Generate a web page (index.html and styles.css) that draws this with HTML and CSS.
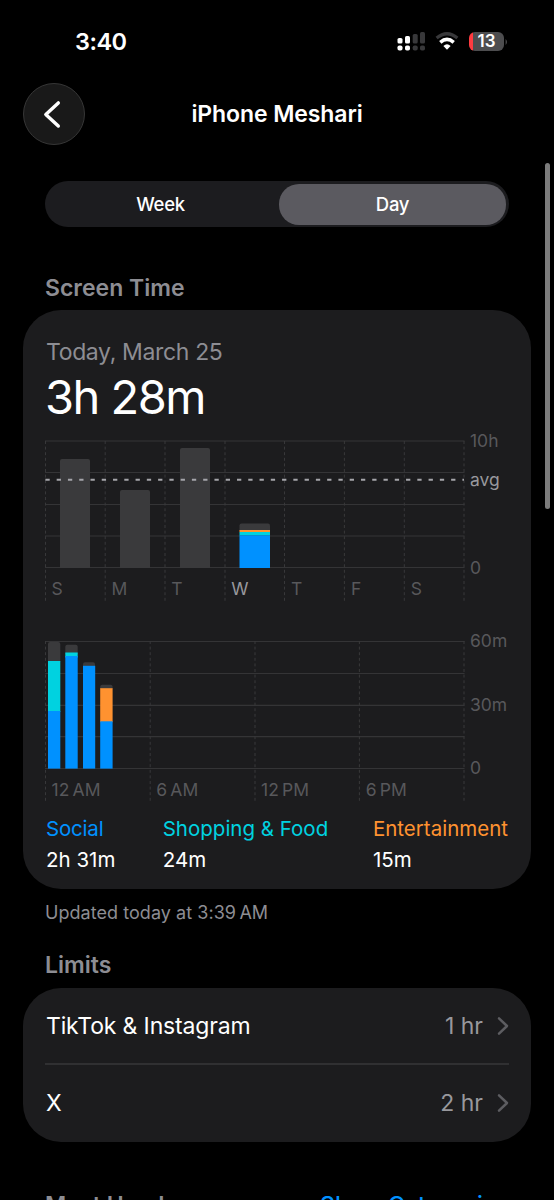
FILE: index.html
```html
<!DOCTYPE html>
<html lang="en">
<head>
    <meta charset="UTF-8">
    <meta name="viewport" content="width=device-width, initial-scale=1.0">
    <title>Screen Time</title>
    <link rel="stylesheet" href="styles.css">
</head>
<body>
    <div class="screen">
        <div class="status">
            <span class="time">3:40</span>
            <div class="status_icons">
                <svg class="signal" width="30" height="22" viewBox="0 0 30 22">
                    <g fill="#fff">
                        <rect x="0.5" y="7" width="5" height="5.5" rx="1.6"/>
                        <rect x="8" y="5" width="5" height="7.5" rx="1.6"/>
                        <rect x="0.5" y="14.5" width="5" height="5" rx="1.8"/>
                        <rect x="8" y="14.5" width="5" height="5" rx="1.8"/>
                    </g>
                    <g fill="#38383a">
                        <rect x="15.7" y="3" width="5" height="9.5" rx="1.6"/>
                        <rect x="23" y="1" width="5" height="11.5" rx="1.6"/>
                        <rect x="15.7" y="14.5" width="5" height="5" rx="1.8"/>
                        <rect x="23" y="14.5" width="5" height="5" rx="1.8"/>
                    </g>
                </svg>
                <svg class="wifi" width="24" height="19" viewBox="0 0 24 19">
                    <path d="M1.6 6.1 Q12 -2.6 22.4 6.1" fill="none" stroke="#38383a" stroke-width="3.2"/>
                    <path d="M5.3 10.3 Q12 4.6 18.7 10.3" fill="none" stroke="#fff" stroke-width="3.6"/>
                    <path d="M8.4 14 Q12 10.7 15.6 14 L12 17.8 Z" fill="#fff"/>
                </svg>
                <div class="battery"><span>13</span></div>
                <svg class="cap" width="3" height="8" viewBox="0 0 3 8"><path d="M0.6 1 Q3.4 4 0.6 7 Z" fill="#4d4d4f"/></svg>
            </div>
        </div>

        <div class="nav">
            <a class="back" href="#">
                <svg width="60" height="60" viewBox="0 0 60 60"><path d="M34.3 18.9 L21.8 30.4 L34.3 42" fill="none" stroke="#fff" stroke-width="3.4" stroke-linecap="round" stroke-linejoin="round"/></svg>
            </a>
            <h1>iPhone Meshari</h1>
        </div>

        <div class="tabs">
            <a href="#">Week</a>
            <a href="#" class="on">Day</a>
        </div>

        <h2 class="title_time">Screen Time</h2>
        <div class="card usage">
            <p class="date">Today, March 25</p>
            <p class="total">3h 28m</p>

            <div class="chart week">
                <div class="plot">
                    <svg width="420" height="162" viewBox="0 0 420 162">
                        <path class="line" d="M0 1H419.5 M0 32.5H419.5 M0 64.5H419.5 M0 96H419.5 M0 127.5H419.5"/>
                        <path class="dash" d="M0.5 1V162 M60.2 1V162 M120 1V162 M180 1V162 M239.5 1V162 M299.4 1V162 M359.3 1V162 M419 1V162"/>
                        <g fill="#3a3a3c">
                            <path d="M15 128V21a2 2 0 0 1 2-2H43a2 2 0 0 1 2 2V128Z"/>
                            <path d="M75 128V52a2 2 0 0 1 2-2H103a2 2 0 0 1 2 2V128Z"/>
                            <path d="M135 128V10a2 2 0 0 1 2-2H163a2 2 0 0 1 2 2V128Z"/>
                            <path d="M194.5 91V85.5a2 2 0 0 1 2-2H223a2 2 0 0 1 2 2V91Z"/>
                        </g>
                        <rect x="194.5" y="90" width="30.5" height="2.2" fill="#ff9230"/>
                        <rect x="194.5" y="92" width="30.5" height="3.6" fill="#00d2e0"/>
                        <rect x="194.5" y="95.4" width="30.5" height="32.6" fill="#0091ff"/>
                        <path class="avg" d="M0.4 39.8H419"/>
                    </svg>
                    <div class="labels">
                        <span>S</span><span>M</span><span>T</span><span class="today">W</span><span>T</span><span>F</span><span>S</span>
                    </div>
                </div>
                <div class="axis">
                    <span>10h</span>
                    <span class="mean">avg</span>
                    <span>0</span>
                </div>
            </div>

            <div class="chart hours">
                <div class="plot">
                    <svg width="420" height="162" viewBox="0 0 420 162">
                        <path class="line" d="M0 1.5H419.5 M0 33.5H419.5 M0 65.3H419.5 M0 96.7H419.5 M0 128.5H419.5"/>
                        <path class="dash" d="M0.5 1V162 M105.2 1V162 M210 1V162 M314.4 1V162 M419 1V162"/>
                        <g fill="#3a3a3c">
                            <path d="M3 22V4a2 2 0 0 1 2-2H13.3a2 2 0 0 1 2 2V22Z"/>
                            <path d="M20.3 14V6.7a2 2 0 0 1 2-2H30.7a2 2 0 0 1 2 2V14Z"/>
                            <path d="M38 27V24.2a2 2 0 0 1 2-2H48a2 2 0 0 1 2 2V27Z"/>
                            <path d="M55.2 49V46.7a2 2 0 0 1 2-2H65.6a2 2 0 0 1 2 2V49Z"/>
                        </g>
                        <g fill="#00d2e0">
                            <rect x="3" y="21" width="12.3" height="51"/>
                            <rect x="20.3" y="12.5" width="12.4" height="5"/>
                        </g>
                        <rect x="55.2" y="48.2" width="12.4" height="34" fill="#ff9230"/>
                        <g fill="#0091ff">
                            <rect x="3" y="71" width="12.3" height="57.6"/>
                            <rect x="20.3" y="16" width="12.4" height="112.6"/>
                            <rect x="38" y="25.8" width="12.2" height="102.8"/>
                            <rect x="55.2" y="81.3" width="12.4" height="47.3"/>
                        </g>
                    </svg>
                    <div class="labels">
                        <span>12&#8201;AM</span><span>6&#8201;AM</span><span>12&#8201;PM</span><span>6&#8201;PM</span>
                    </div>
                </div>
                <div class="axis">
                    <span>60m</span>
                    <span>30m</span>
                    <span>0</span>
                </div>
            </div>

            <ul class="legend">
                <li><b class="social">Social</b><span>2h 31m</span></li>
                <li><b class="shopping">Shopping &amp; Food</b><span>24m</span></li>
                <li><b class="fun">Entertainment</b><span>15m</span></li>
            </ul>
        </div>
        <p class="updated">Updated today at 3:39&#8201;AM</p>

        <h2 class="title_limits">Limits</h2>
        <ul class="card limits">
            <li>
                <span class="app">TikTok &amp; Instagram</span>
                <span class="limit">1 hr</span>
                <svg width="12" height="20" viewBox="0 0 12 20"><path d="M2 2.4 L10 10 L2 17.6" fill="none" stroke="#5d5d61" stroke-width="2.5" stroke-linecap="round" stroke-linejoin="round"/></svg>
            </li>
            <li>
                <span class="app">X</span>
                <span class="limit">2 hr</span>
                <svg width="12" height="20" viewBox="0 0 12 20"><path d="M2 2.4 L10 10 L2 17.6" fill="none" stroke="#5d5d61" stroke-width="2.5" stroke-linecap="round" stroke-linejoin="round"/></svg>
            </li>
        </ul>

        <div class="most">
            <h2>Most Used</h2>
            <a href="#">Show Categories</a>
        </div>

        <div class="scrollbar"></div>
    </div>
</body>
</html>
```
FILE: styles.css
```css
*{
    margin: 0;
    padding: 0;
    box-sizing: border-box;
}
body{
    background: #000;
    color: #fff;
    font-family: Inter, "Liberation Sans", sans-serif;
    font-size: 23px;
}
a{
    color: inherit;
    text-decoration: none;
}
ul{
    list-style: none;
}
svg{
    display: block;
}
.screen{
    position: relative;
    width: 554px;
    height: 1200px;
    overflow: hidden;
}

/* status bar */
.status{
    height: 83px;
    padding: 0 46px 0 75px;
    display: flex;
    justify-content: space-between;
}
.time{
    font-size: 23.5px;
    font-weight: 600;
    line-height: 83px;
    letter-spacing: -0.5px;
}
.status_icons{
    height: 83px;
    display: flex;
    align-items: center;
}
.wifi{
    margin: 0 10px 0 8px;
}
.battery{
    width: 35px;
    height: 19px;
    border-radius: 6px;
    background: linear-gradient(90deg, #ff3b40 0 4.5px, #4d4d4f 4.5px);
    font-size: 17px;
    font-weight: 600;
    line-height: 19px;
    text-align: center;
}
.cap{
    margin-left: 1px;
}

/* nav */
.nav{
    height: 62px;
    padding: 0 23px;
    display: grid;
    grid-template-columns: 62px 1fr 62px;
    align-items: center;
}
.back{
    width: 62px;
    height: 62px;
    border: 1px solid #363636;
    border-radius: 50%;
    background: #191919;
}
.nav h1{
    font-size: 23px;
    font-weight: 600;
    line-height: 60px;
    letter-spacing: -0.1px;
    text-align: center;
    white-space: nowrap;
}
.tabs{
    height: 46px;
    margin: 36px 45px 0;
    padding: 3px 3px 3px 0;
    display: grid;
    grid-template-columns: 231px 227px;
    justify-content: space-between;
    border-radius: 23px;
    background: #1c1c1f;
}
.tabs a{
    border-radius: 20px;
    font-size: 18.5px;
    font-weight: 500;
    line-height: 41px;
    letter-spacing: -0.3px;
    text-align: center;
}
.tabs .on{
    background: #5b5a60;
}

h2{
    color: #8d8d93;
    font-size: 23px;
    font-weight: 600;
    line-height: 30px;
}
.title_time{
    margin: 46px 45px 0;
}
.card{
    margin: 0 23px;
    border-radius: 38px;
    background: #1c1c1e;
}
.usage{
    height: 579px;
    margin-top: 7px;
    padding: 27px 0 0 22px;
}
.date{
    padding-left: 1px;
    color: #8d8d93;
    line-height: 30px;
    letter-spacing: -0.35px;
}
.total{
    font-size: 47px;
    line-height: 60px;
    letter-spacing: -1.5px;
}

/* charts */
.chart{
    height: 162px;
    display: flex;
    color: #58585b;
    font-size: 17.5px;
    line-height: 20px;
}
.week{
    margin-top: 13px;
}
.hours{
    margin-top: 38px;
}
.plot{
    display: grid;
    width: 420px;
}
.plot > *{
    grid-area: 1 / 1;
}
.line{
    fill: none;
    stroke: #343436;
    stroke-width: 1.2;
}
.dash{
    fill: none;
    stroke: #38383a;
    stroke-width: 1;
    stroke-dasharray: 3 2.6;
}
.avg{
    stroke: #a5a5aa;
    stroke-width: 2;
    stroke-dasharray: 4.3 6.97;
}
.labels{
    align-self: end;
    width: 419px;
    padding-bottom: 3px;
    display: flex;
}
.hours .labels{
    padding-bottom: 2px;
}
.labels span{
    flex: 1;
    padding-left: 6.6px;
}
.labels .today{
    color: #98989d;
}
.axis{
    height: 147px;
    margin: -9px 0 0 5px;
    display: flex;
    flex-direction: column;
    justify-content: space-between;
}
.axis .mean{
    margin: 19px 0 auto;
    color: #98989d;
}

.legend{
    margin: 11px 23px 0 1px;
    display: flex;
    justify-content: space-between;
    font-size: 20.5px;
    line-height: 31px;
}
.legend li:first-child{
    width: 72px;
}
.legend b{
    display: block;
    font-weight: 400;
}
.social{
    color: #0091ff;
    letter-spacing: -0.2px;
}
.shopping{
    color: #00d2e0;
}
.fun{
    color: #ff9230;
}
.updated{
    margin: 11px 45px 0;
    color: #8d8d93;
    font-size: 18px;
    line-height: 26px;
    letter-spacing: 0.05px;
}

/* limits */
.title_limits{
    margin: 24px 45px 0;
}
.limits{
    height: 154px;
    margin-top: 8px;
    padding: 0 22px;
}
.limits li{
    height: 75px;
    display: flex;
    align-items: center;
}
.limits li + li{
    height: 78px;
    border-top: 2px solid #303032;
}
.app{
    flex: 1;
    padding-left: 1px;
    letter-spacing: -0.15px;
}
.limit{
    margin-right: 14px;
    color: #98989d;
}
.most{
    margin: 48px 45px 0;
    display: flex;
    justify-content: space-between;
    line-height: 30px;
}
.most a{
    color: #0091ff;
    font-weight: 500;
    letter-spacing: 0.1px;
}
.scrollbar{
    position: absolute;
    top: 163px;
    right: 4px;
    width: 5px;
    height: 346px;
    border-radius: 3px;
    background: #7c7c7c;
}
```
